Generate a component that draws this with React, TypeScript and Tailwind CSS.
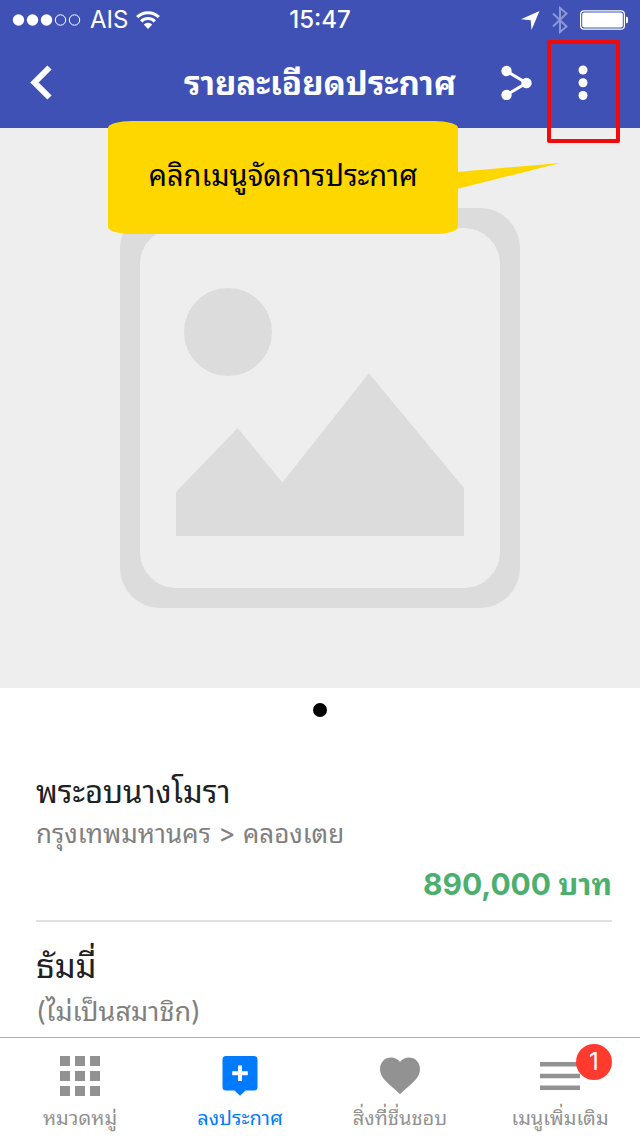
import type { ReactNode } from 'react';
import { clsx } from 'clsx';

type Tab = {
  id: string;
  label: string;
  icon: ReactNode;
  badge?: number;
};

const TABS: Tab[] = [
  { id: 'categories', label: 'หมวดหมู่', icon: <GridIcon /> },
  { id: 'post', label: 'ลงประกาศ', icon: <PostIcon /> },
  { id: 'favorites', label: 'สิ่งที่ชื่นชอบ', icon: <HeartIcon /> },
  { id: 'more', label: 'เมนูเพิ่มเติม', icon: <MenuIcon />, badge: 1 },
];

function GridIcon() {
  return (
    <svg className="size-10" viewBox="0 0 40 40" fill="currentColor" aria-hidden="true">
      {[0, 15, 30].map((y) => [0, 15, 30].map((x) => <rect key={`${x}-${y}`} x={x} y={y} width="10" height="10" />))}
    </svg>
  );
}

function PostIcon() {
  return (
    <svg className="size-10" viewBox="0 0 40 40" aria-hidden="true">
      <path
        fill="currentColor"
        d="M6 0h28A3.500 3.500 0 0 1 37.500 3.500v27.500a3.500 3.500 0 0 1-3.500 3.500H25.500L20 39.700l-5.500-5.200H6A3.500 3.500 0 0 1 2.500 31V3.500A3.500 3.500 0 0 1 6 0z"
      />
      <path d="M20 9.500v15.500M12.200 17.200h15.600" stroke="#fff" strokeWidth="4" />
    </svg>
  );
}

function HeartIcon() {
  return (
    <svg className="size-10" viewBox="0 0 40 40" fill="currentColor" aria-hidden="true">
      <path d="M20 38.300C15 33.200 9 29.200 4.500 23.800 1.500 20.200 0 17 0 13 0 6.300 4.900 1.500 11 1.500c3.600 0 7 1.700 9 4.500 2-2.800 5.400-4.500 9-4.500 6.100 0 11 4.800 11 11.500 0 4-1.500 7.200-4.500 10.800C31 29.200 25 33.200 20 38.300z" />
    </svg>
  );
}

function MenuIcon() {
  return (
    <svg className="size-10" viewBox="0 0 40 40" fill="currentColor" aria-hidden="true">
      <path d="M0 6h40v4.500H0zM0 17.800h40v4.400H0zM0 29.500h40V34H0z" />
    </svg>
  );
}

function StatusBar() {
  return (
    <div className="grid h-10 grid-cols-3 items-center px-3 text-2xl text-white">
      <div className="flex items-center gap-2">
        <svg className="h-4 w-[70px]" viewBox="0 0 70 16" fill="#fff" aria-hidden="true">
          <circle cx="6.500" cy="8" r="5.700" />
          <circle cx="20.500" cy="8" r="5.700" />
          <circle cx="34.500" cy="8" r="5.700" />
          <circle cx="48.500" cy="8" r="5.200" fill="none" stroke="#fff" />
          <circle cx="62.500" cy="8" r="5.200" fill="none" stroke="#fff" />
        </svg>
        <span>AIS</span>
        <svg className="h-5 w-6" viewBox="0 0 24 20" aria-hidden="true">
          <g fill="none" stroke="#fff" strokeWidth="3.200">
            <path d="M1.200 7.200a15.300 15.300 0 0 1 21.600 0" />
            <path d="M5.200 11.300a9.600 9.600 0 0 1 13.600 0" />
          </g>
          <path fill="#fff" d="M12 19l-4.200-4.500a6 6 0 0 1 8.400 0z" />
        </svg>
      </div>
      <span className="text-center font-medium">15:47</span>
      <div className="flex items-center justify-end gap-3">
        <svg className="size-5" viewBox="0 0 20 20" fill="#fff" aria-hidden="true">
          <path d="M19.500 1L11.500 20l-.8-9.700L1 9.300z" />
        </svg>
        <svg className="h-7 w-4 text-[#8d97d6]" viewBox="0 0 16 28" fill="none" stroke="currentColor" strokeWidth="2" aria-hidden="true">
          <path d="M1 7.500l13.500 13L8 26V2l6.500 5.500L1 20.500" />
        </svg>
        <svg className="h-5 w-12" viewBox="0 0 48 20" aria-hidden="true">
          <rect x=".6" y=".8" width="43.800" height="18.400" rx="3.500" fill="none" stroke="#fff" strokeWidth="1.200" />
          <rect x="2.200" y="2.400" width="40.600" height="15.200" rx="2" fill="#fff" />
          <path d="M46 6.500c2 .8 3 2 3 3.500s-1 2.700-3 3.500z" fill="#fff" />
        </svg>
      </div>
    </div>
  );
}

function NavBar() {
  return (
    <div className="flex h-22 items-center justify-between px-5 pb-1 text-white">
      <div className="flex flex-1 pr-[15px]">
        <button type="button" aria-label="ย้อนกลับ" className="flex size-11 items-center justify-center">
          <svg className="h-9 w-6" viewBox="0 0 24 36" fill="none" stroke="currentColor" strokeWidth="6" aria-hidden="true">
            <path d="M19.500 3.500L4.500 18.500l15 15" />
          </svg>
        </button>
      </div>
      <h1 className="pt-1 text-[33px] font-bold whitespace-nowrap">รายละเอียดประกาศ</h1>
      <div className="flex flex-1 items-center justify-end gap-[22px] pr-[15px]">
        <button type="button" aria-label="แชร์" className="flex size-11 items-center justify-center">
          <svg className="size-9" viewBox="0 0 36 36" fill="currentColor" aria-hidden="true">
            <path d="M7.500 7l20 12-20 12" fill="none" stroke="currentColor" strokeWidth="3" />
            <circle cx="7.500" cy="7" r="5.200" />
            <circle cx="27.500" cy="19" r="5.200" />
            <circle cx="7.500" cy="31" r="5.200" />
          </svg>
        </button>
        <button type="button" aria-label="จัดการประกาศ" className="relative flex size-11 items-center justify-center">
          <svg className="size-9" viewBox="0 0 36 36" fill="currentColor" aria-hidden="true">
            <circle cx="18" cy="6" r="4.500" />
            <circle cx="18" cy="18.800" r="4.500" />
            <circle cx="18" cy="31.500" r="4.500" />
          </svg>
          <span className="absolute -top-5 -left-[14px] z-10 h-[103px] w-[73px] rounded-xs border-4 border-[#f00a0a]" />
        </button>
      </div>
    </div>
  );
}

function Callout() {
  return (
    <div className="absolute top-[121px] left-[108px] z-10 flex h-[113px] w-[350px] items-center justify-center rounded-[24px/7px] bg-[#ffd700] pb-1">
      <p className="text-[29px] text-black">คลิกเมนูจัดการประกาศ</p>
      <svg className="absolute top-[41px] left-[349px] h-7 w-[103px]" viewBox="0 0 103 28" fill="#ffd700" aria-hidden="true">
        <path d="M0 10L103 1 0 27z" />
      </svg>
    </div>
  );
}

function Gallery() {
  return (
    <section>
      <div className="flex justify-center bg-[#eee] py-20">
        <svg className="size-100" viewBox="0 0 100 100" fill="#dcdcdc" aria-hidden="true">
          <rect width="100" height="100" rx="10" />
          <rect x="5" y="5" width="90" height="90" rx="9" fill="#eee" />
          <circle cx="27" cy="31" r="11" />
          <path d="M14 82V71l15.400-16 11.200 13.600L62.200 41.300 86 70v12z" />
        </svg>
      </div>
      <div className="flex h-11 items-center justify-center">
        <span className="size-3.5 rounded-full bg-black" />
      </div>
    </section>
  );
}

function Details() {
  return (
    <section className="px-7 pt-10 pl-9">
      <h2 className="text-[31px] leading-10 text-[#212121]">พระอบนางโมรา</h2>
      <p className="text-[26px] leading-11 text-[#808080]">กรุงเทพมหานคร &gt; คลองเตย</p>
      <p className="border-b-2 border-[#e0e0e0] pb-2 text-right text-3xl leading-14 font-bold text-[#4caf6e]">890,000 บาท</p>
      <h3 className="pt-4 text-[33px] leading-14 text-[#212121]">ธัมมี่</h3>
      <p className="text-[27px] leading-9 text-[#808080]">(ไม่เป็นสมาชิก)</p>
    </section>
  );
}

function TabBar({ active }: { active: string }) {
  return (
    <nav className="mt-auto grid grid-cols-4 border-t border-[#adadad] bg-white">
      {TABS.map((tab) => (
        <a
          key={tab.id}
          href={`#${tab.id}`}
          className={clsx(
            'flex h-[98px] flex-col items-center pt-[18px] text-xl leading-7',
            tab.id === active ? 'text-[#007aff]' : 'text-[#929292]'
          )}
        >
          <span className="relative">
            {tab.icon}
            {tab.badge && (
              <span className="absolute -top-3 -right-8 flex size-9 items-center justify-center rounded-full bg-[#ff3b30] text-2xl text-white">
                {tab.badge}
              </span>
            )}
          </span>
          <span className="mt-2 whitespace-nowrap">{tab.label}</span>
        </a>
      ))}
    </nav>
  );
}

export default function App() {
  return (
    <div className="relative flex min-h-screen flex-col bg-white font-[Inter,'Noto_Sans_Thai_Looped','Noto_Sans_Thai','Noto_Sans',sans-serif]">
      <header className="bg-[#3f51b5]">
        <StatusBar />
        <NavBar />
      </header>
      <main>
        <Gallery />
        <Details />
      </main>
      <TabBar active="post" />
      <Callout />
    </div>
  );
}
